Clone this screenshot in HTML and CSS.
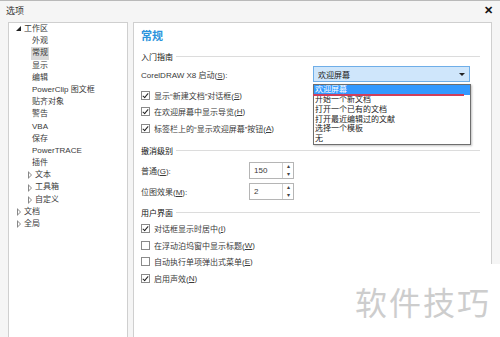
FILE: index.html
```html
<!DOCTYPE html>
<html lang="zh">
<head>
<meta charset="utf-8">
<link rel="stylesheet" href="styles.css">
</head>
<body>
<div class="window">
  <div class="titlebar">
    <span class="title">选项</span>
    <span class="close">✕</span>
  </div>
  <div class="main">
    <div class="tree">
      <div class="node lvl0"><span class="tri open"></span>工作区</div>
      <div class="node lvl1">外观</div>
      <div class="node lvl1"><span class="sel">常规</span></div>
      <div class="node lvl1">显示</div>
      <div class="node lvl1">编辑</div>
      <div class="node lvl1">PowerClip 图文框</div>
      <div class="node lvl1">贴齐对象</div>
      <div class="node lvl1">警告</div>
      <div class="node lvl1">VBA</div>
      <div class="node lvl1">保存</div>
      <div class="node lvl1">PowerTRACE</div>
      <div class="node lvl1">插件</div>
      <div class="node lvl1b"><span class="tri closed"></span>文本</div>
      <div class="node lvl1b"><span class="tri closed"></span>工具箱</div>
      <div class="node lvl1b"><span class="tri closed"></span>自定义</div>
      <div class="node lvl0"><span class="tri closed"></span>文档</div>
      <div class="node lvl0"><span class="tri closed"></span>全局</div>
    </div>
    <div class="panel">
      <div class="heading">常规</div>

      <div class="section s1"><span>入门指南</span><i class="rule"></i></div>
      <div class="row startup">
        <span class="label wide">CorelDRAW X8 启动(<u>S</u>):</span>
        <div class="select">
          <span>欢迎屏幕</span>
          <span class="arrow"></span>
        </div>
      </div>
      <div class="checks c1">
        <div class="check"><span class="box on"></span>显示“新建文档”对话框(<u>S</u>)</div>
        <div class="check"><span class="box on"></span>在欢迎屏幕中显示导览(<u>H</u>)</div>
        <div class="check"><span class="box on"></span>标签栏上的“显示欢迎屏幕”按钮(<u>A</u>)</div>
      </div>

      <div class="section s2"><span>撤消级别</span><i class="rule"></i></div>
      <div class="spins">
        <div class="row spinrow">
          <span class="label narrow">普通(<u>G</u>):</span>
          <div class="spin"><span class="val">150</span><span class="btns"><b>▴</b><b>▾</b></span></div>
        </div>
        <div class="row spinrow">
          <span class="label narrow">位图效果(<u>M</u>):</span>
          <div class="spin"><span class="val">2</span><span class="btns"><b>▴</b><b>▾</b></span></div>
        </div>
      </div>

      <div class="section s3"><span>用户界面</span><i class="rule"></i></div>
      <div class="checks c2">
        <div class="check"><span class="box on"></span>对话框显示时居中(<u>I</u>)</div>
        <div class="check"><span class="box"></span>在浮动泊坞窗中显示标题(<u>W</u>)</div>
        <div class="check"><span class="box"></span>自动执行单项弹出式菜单(<u>E</u>)</div>
        <div class="check"><span class="box on"></span>启用声效(<u>N</u>)</div>
      </div>
    </div>
  </div>

  <div class="droplist">
    <div class="opt hi">欢迎屏幕</div>
    <div class="opt">开始一个新文档</div>
    <div class="opt">打开一个已有的文档</div>
    <div class="opt">打开最近编辑过的文献</div>
    <div class="opt">选择一个模板</div>
    <div class="opt">无</div>
  </div>
  <div class="redline"></div>

  <div class="watermark">软件技巧</div>
</div>
</body>
</html>
```
FILE: styles.css
```css
* { box-sizing: border-box; }
html, body { margin: 0; padding: 0; }
body {
  width: 500px;
  height: 337px;
  overflow: hidden;
  font-family: "Liberation Sans", "Noto Sans CJK SC", sans-serif;
  font-size: 8px;
  color: #3a3a3a;
  background: #f5f5f5;
}
.window {
  position: relative;
  width: 500px;
  height: 337px;
  border-top: 1px solid #b9b9b9;
  background: #f5f5f5;
  display: flex;
  flex-direction: column;
}
.titlebar {
  height: 21px;
  display: flex;
  align-items: center;
  justify-content: space-between;
  padding: 0 7px 2px 6px;
  font-size: 9px;
  color: #333;
}
.close { font-size: 11px; color: #111; font-weight: bold; }
.main {
  flex: 1;
  display: flex;
  gap: 5px;
  padding: 0 8px 0 8px;
  min-height: 0;
}
.tree {
  width: 120px;
  background: #fff;
  border: 1px solid #cfcfcf;
  border-bottom: none;
}
.node {
  height: 12.2px;
  line-height: 12.2px;
  display: flex;
  align-items: center;
  white-space: nowrap;
}
.lvl0 { padding-left: 7px; }
.lvl1 { padding-left: 23px; }
.lvl1b { padding-left: 18px; }
.tri { width: 7px; height: 8px; display: inline-block; position: relative; margin-right: 1px; }
.tri.open::before {
  content: "";
  position: absolute; left: 0; top: 1px;
  border-left: 5px solid transparent;
  border-bottom: 5px solid #222;
}
.tri.closed::before {
  content: "";
  position: absolute; left: 1px; top: 0;
  border-top: 4px solid transparent;
  border-bottom: 4px solid transparent;
  border-left: 4px solid #888;
}
.tri.closed::after {
  content: "";
  position: absolute; left: 2px; top: 2px;
  border-top: 2px solid transparent;
  border-bottom: 2px solid transparent;
  border-left: 2px solid #fff;
}
.sel { background: #d9d9d9; padding: 0 1px; margin-left: -1px; }

.panel {
  flex: 1;
  background: #fff;
  border: 1px solid #cfcfcf;
  border-bottom: none;
  padding: 0 11px 0 7px;
  display: flex;
  flex-direction: column;
}
.heading {
  height: 26px;
  line-height: 26px;
  font-size: 11px;
  font-weight: bold;
  color: #2b93dc;
  flex: none;
}
.section {
  height: 14px;
  display: flex;
  align-items: center;
  gap: 3px;
  color: #111;
  flex: none;
}
.rule { flex: 1; height: 1px; background: #dcdcdc; display: block; }
.row { display: flex; align-items: center; flex: none; }
.startup { height: 16px; margin-top: 3px; }
.label.wide { width: 172px; }
.label.narrow { width: 108px; }
.select {
  width: 157px;
  height: 16px;
  background: #cfe6fb;
  border: 1px solid #6faee8;
  display: flex;
  align-items: center;
  justify-content: space-between;
  padding: 0 4px 0 4px;
  color: #222;
}
.arrow {
  width: 0; height: 0;
  border-left: 3px solid transparent;
  border-right: 3px solid transparent;
  border-top: 3px solid #222;
}
.checks { display: flex; flex-direction: column; flex: none; }
.c1 { margin-top: 5px; }
.c1 .check { height: 16.5px; }
.c2 { margin-top: 1px; }
.c2 .check { height: 16.7px; }
.check { display: flex; align-items: center; white-space: nowrap; }
.box {
  width: 9px; height: 9px;
  border: 1px solid #8a8a8a;
  background: #fff;
  margin-right: 4px;
  position: relative;
  flex: none;
}
.box.on::after {
  content: "";
  position: absolute;
  left: 2px; top: 0px;
  width: 2px; height: 5px;
  border-right: 1.5px solid #222;
  border-bottom: 1.5px solid #222;
  transform: rotate(40deg);
}
.s2 { margin-top: 6.5px; }
.spins { display: flex; flex-direction: column; gap: 4px; margin-top: 5px; flex: none; }
.spinrow { height: 17px; }
.spin {
  width: 45px; height: 17px;
  border: 1px solid #b5b5b5;
  display: flex;
  background: #fff;
}
.val { flex: 1; padding-left: 4px; line-height: 15px; }
.btns {
  width: 11px;
  border-left: 1px solid #d0d0d0;
  display: flex;
  flex-direction: column;
  font-size: 6px;
  line-height: 7.5px;
  text-align: center;
  color: #444;
}
.btns b { font-weight: normal; display: block; height: 7.5px; }
.s3 { margin-top: 5px; }
u { text-decoration: underline; text-underline-offset: 1px; }

.droplist {
  position: absolute;
  left: 313px;
  top: 83px;
  width: 158px;
  height: 61px;
  background: #fff;
  border: 1px solid #6e6e6e;
  box-shadow: 1px 1px 2px rgba(0,0,0,0.25);
  font-size: 8px;
  line-height: 9.8px;
}
.opt { height: 9.8px; padding-left: 1px; white-space: nowrap; color: #222; overflow: hidden; }
.opt.hi { background: #3399ff; color: #fff; height: 10px; }
.redline {
  position: absolute;
  left: 313px;
  top: 93px;
  width: 151px;
  height: 2px;
  background: #cf3f5b;
}
.watermark {
  position: absolute;
  left: 300px;
  top: 263px;
  width: 200px;
  height: 74px;
  background: #fff;
  color: #cdcdcd;
  font-family: "Noto Sans CJK SC", sans-serif;
  font-size: 32px;
  line-height: 34px;
  letter-spacing: 2px;
  padding: 20px 0 0 55px;
  white-space: nowrap;
  overflow: hidden;
}
```
